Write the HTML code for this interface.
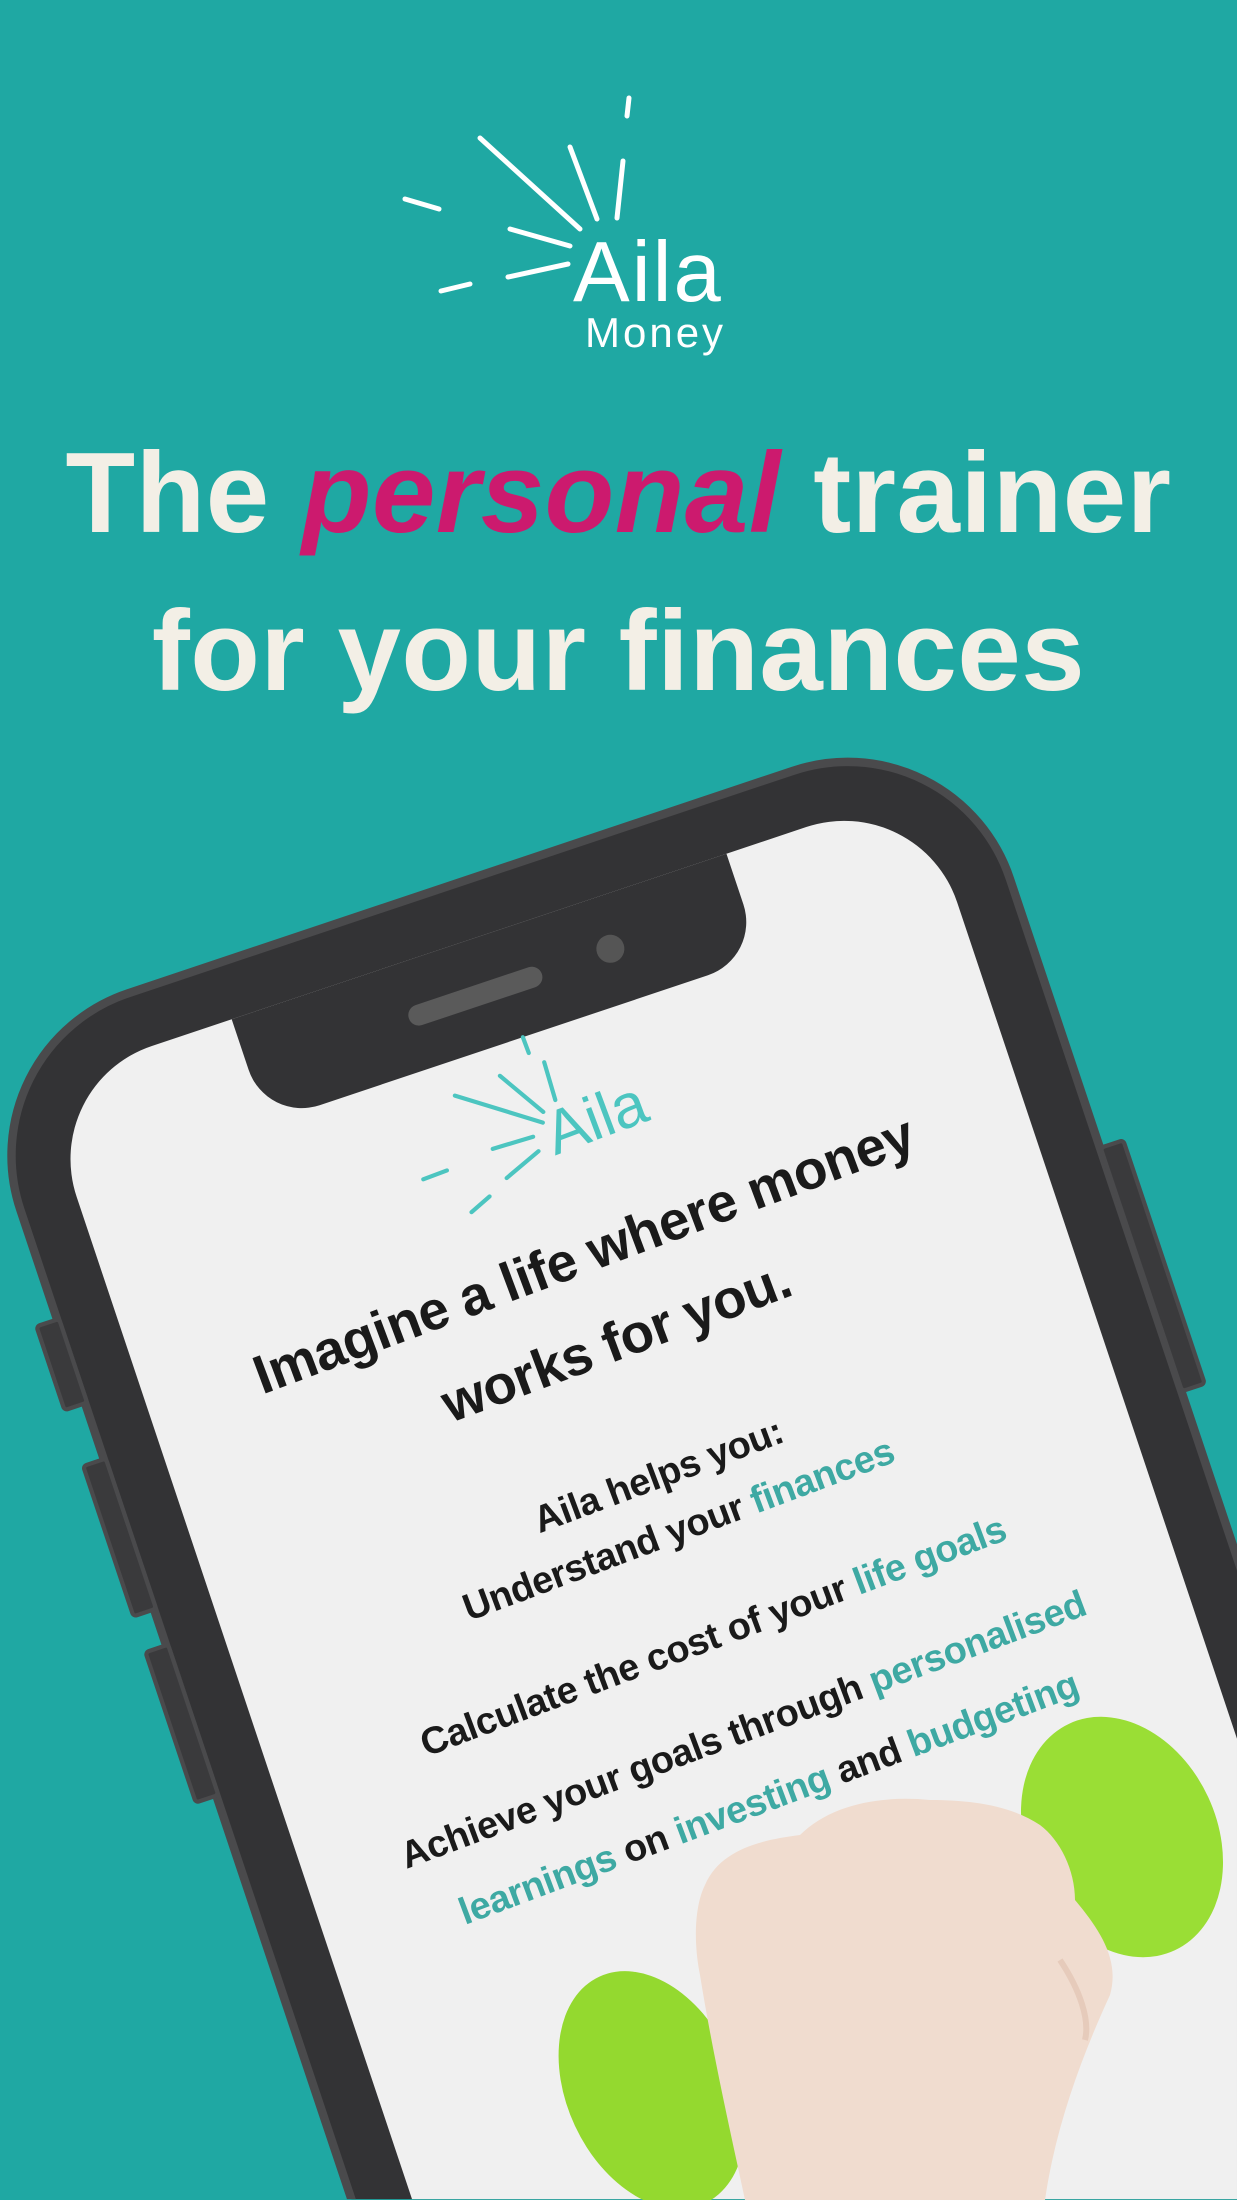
<!DOCTYPE html>
<html><head><meta charset="utf-8"><style>
html,body{margin:0;padding:0;width:1237px;height:2200px;overflow:hidden}
#root{width:1237px;height:2200px;background:#1fa8a3;position:relative;overflow:hidden;font-family:"Liberation Sans",sans-serif}
.abs{position:absolute}
.h{position:absolute;left:0;width:1237px;text-align:center;color:#f3efe6;font-weight:bold;font-size:114px;line-height:158px;letter-spacing:0.5px}
.h i{color:#cc1a6e}
#wrap{position:absolute;left:0;top:0;width:882px;height:1568px;transform-origin:0 0;transform:scale(1.40249);overflow:hidden}
#phone{position:absolute;left:-28px;top:745px;width:750px;height:1600px;transform-origin:0 0;transform:rotate(-18.5deg);background:#333335;border:6px solid #4a4a4c;border-radius:125px;box-sizing:border-box}
.btn{position:absolute;background:#3a3a3c;border:3px solid #4a4a4c;border-radius:4px}
#screen{position:absolute;left:38px;top:38px;right:38px;bottom:38px;background:#f0f0f0;border-radius:85px;overflow:hidden}
#notch{position:absolute;left:145px;top:-10px;width:372px;height:88px;background:#333335;border-radius:0 0 40px 40px}
.t{position:absolute;left:-100px;width:862px;text-align:center;color:#1a1a1a;font-weight:bold;transform-origin:50% 50%;letter-spacing:-0.3px}
.c{color:#3ea9a3}
</style></head><body><div id="root">
<svg class="abs" style="left:0;top:0" width="1237" height="380">
<g stroke="#fff" stroke-width="5" stroke-linecap="round">
<line x1="629" y1="98" x2="627" y2="116"/>
<line x1="480" y1="138" x2="580" y2="229"/>
<line x1="570" y1="147" x2="597" y2="219"/>
<line x1="623" y1="161" x2="617" y2="218"/>
<line x1="405" y1="199" x2="439" y2="209"/>
<line x1="510" y1="229" x2="570" y2="246"/>
<line x1="508" y1="277" x2="568" y2="264"/>
<line x1="441" y1="291" x2="470" y2="284"/>
</g>
<text x="573" y="301" fill="#fff" font-family="Liberation Sans" font-size="85" letter-spacing="2">Aila</text>
<text x="585" y="347" fill="#fff" font-family="Liberation Sans" font-size="42" letter-spacing="3">Money</text>
</svg>
<div class="h" style="top:415px">The <i>personal</i> trainer</div>
<div class="h" style="top:573px">for your finances</div>
<div id="wrap">
<div id="phone">
<div class="btn" style="left:-20px;top:200px;width:14px;height:60px"></div>
<div class="btn" style="left:-20px;top:305px;width:14px;height:110px"></div>
<div class="btn" style="left:-20px;top:445px;width:14px;height:110px"></div>
<div class="btn" style="left:740px;top:320px;width:14px;height:180px"></div>
<div id="screen">
<div id="notch">
<div class="abs" style="left:120px;top:42px;width:100px;height:15px;border-radius:8px;background:#5a5a5a"></div>
<div class="abs" style="left:262px;top:38px;width:20px;height:20px;border-radius:50%;background:#555"></div>
</div>
<svg class="abs" style="left:10px;top:0" width="660" height="260">
<g stroke="#4cc5c0" stroke-width="3" stroke-linecap="round" transform="rotate(-2 330 140)">
<line x1="330" y1="78" x2="330" y2="90"/>
<line x1="270" y1="100" x2="322" y2="140"/>
<line x1="305" y1="98" x2="325" y2="133"/>
<line x1="338" y1="100" x2="336" y2="128"/>
<line x1="228" y1="148" x2="246" y2="148"/>
<line x1="282" y1="145" x2="312" y2="147"/>
<line x1="284" y1="168" x2="312" y2="158"/>
<line x1="252" y1="182" x2="268" y2="176"/>
</g>
<text x="322" y="165" fill="#4cc5c0" font-family="Liberation Sans" font-size="44" transform="rotate(-2 330 140)">Aila</text>
</svg>
<div class="t" style="top:207px;font-size:39px;line-height:66px;transform:rotate(-2deg)">Imagine a life where money<br>works for you.</div>
<div class="t" style="top:385px;font-size:27px;line-height:41px;transform:rotate(-2deg)">Aila helps you:<br>Understand your <span class="c">finances</span></div>
<div class="t" style="top:506px;font-size:27px;line-height:40px;transform:rotate(-2deg)">Calculate the cost of your <span class="c">life goals</span></div>
<div class="t" style="top:570px;font-size:27px;line-height:52px;transform:rotate(-2deg)">Achieve your goals through <span class="c">personalised</span><br><span class="c">learnings</span> on <span class="c">investing</span> and <span class="c">budgeting</span></div>
</div>
</div>
</div>
<svg class="abs" style="left:0;top:0" width="1237" height="2200">
<path d="M700,2035 L1080,1835 L1120,1915 L740,2115 Z" fill="#8ad22c"/>
<ellipse cx="652" cy="2090" rx="85" ry="125" transform="rotate(-25 652 2090)" fill="#94d92f"/>
<ellipse cx="1122" cy="1837" rx="95" ry="125" transform="rotate(-25 1122 1837)" fill="#9ade35"/>
<path d="M705,1885 C720,1850 760,1840 800,1835 C830,1805 880,1795 930,1800 C970,1800 1010,1805 1040,1825 C1060,1840 1075,1870 1075,1900 C1100,1930 1120,1960 1110,1995 C1080,2060 1055,2130 1045,2200 L745,2200 C730,2130 712,2050 700,1975 C693,1940 695,1905 705,1885 Z" fill="#f0dccf"/>
<path d="M1060,1960 C1080,1990 1090,2020 1085,2040" stroke="#e6cbbb" stroke-width="6" fill="none"/>
</svg>
</div></body></html>
